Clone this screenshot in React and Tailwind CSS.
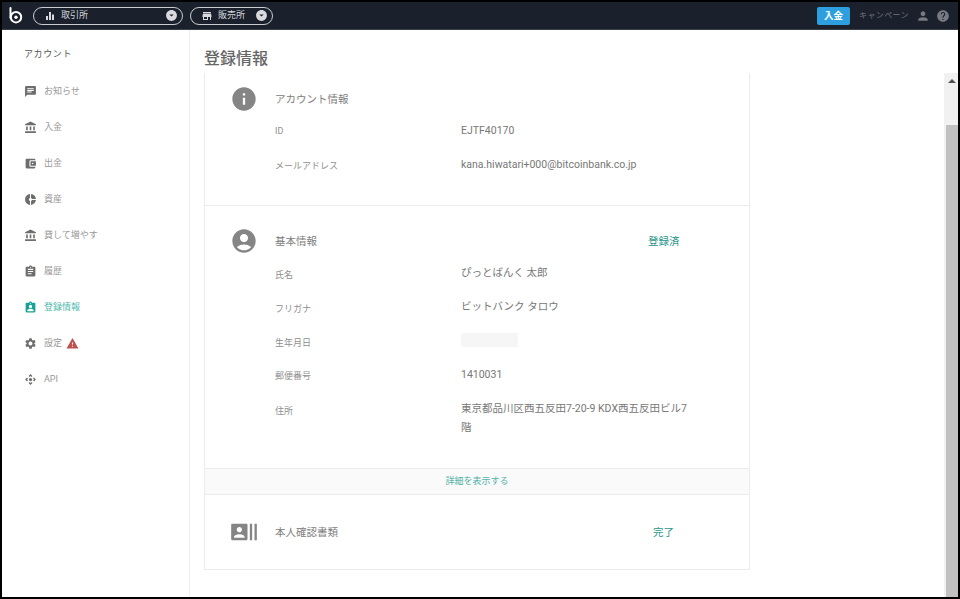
import React from "react";
import { MdChat, MdAccountBalance, MdAccountBalanceWallet, MdDonutSmall, MdAssignment, MdAssignmentInd, MdSettings, MdWarning, MdControlCamera, MdInfo, MdAccountCircle, MdRecentActors, MdPerson, MdHelp, MdEqualizer, MdStore, MdArrowDropDownCircle } from "react-icons/md";

const font = "font-['Roboto','Noto_Sans_CJK_JP',sans-serif]";

const nav = [
  { icon: MdChat, label: "お知らせ" },
  { icon: MdAccountBalance, label: "入金" },
  { icon: MdAccountBalanceWallet, label: "出金" },
  { icon: MdDonutSmall, label: "資産" },
  { icon: MdAccountBalance, label: "貸して増やす" },
  { icon: MdAssignment, label: "履歴" },
  { icon: MdAssignmentInd, label: "登録情報", active: true },
  { icon: MdSettings, label: "設定", warn: true },
  { icon: MdControlCamera, label: "API" },
];

function Logo() {
  return (
    <svg width="14" height="17" viewBox="0 0 14 17" fill="none" className="shrink-0">
      <path d="M1.5 1v10" stroke="#fff" strokeWidth="2" strokeLinecap="round" />
      <circle cx="7" cy="10.2" r="5.2" stroke="#fff" strokeWidth="2" />
      <circle cx="7" cy="10.2" r="1.7" fill="#fff" />
    </svg>
  );
}

function Pill({ icon: Icon, label, w }) {
  return (
    <div className={`flex items-center h-[18px] rounded-full border border-[#c9ccd1] pl-[10px] pr-[4px] ${w}`}>
      <Icon className="text-[#d8dadd] w-[12px] h-[12px] shrink-0" />
      <span className="ml-[5px] text-[9px] leading-none text-[#d5d8dc]">{label}</span>
      <MdArrowDropDownCircle className="ml-auto text-[#d8dadd] w-[13px] h-[13px] shrink-0" />
    </div>
  );
}

function Row({ label, children, labelClass = "", valueClass = "mb-[4px]", h = "h-[34px]", align = "items-center" }) {
  return (
    <div className={`flex ${align} ${h} pl-[70px]`}>
      <div className={`w-[186px] shrink-0 text-[9px] leading-none text-[#8f8f8f] ${labelClass}`}>{label}</div>
      <div className={`w-[232px] text-[10.5px] leading-[19px] text-[#777] ${valueClass}`}>{children}</div>
    </div>
  );
}

function SectionHead({ icon: Icon, title, status, statusClass = "", iconClass = "w-[28px] h-[28px]" }) {
  return (
    <div className="flex items-center h-[24px] pl-[24px]">
      <div className="flex items-center justify-center h-[24px] w-[30px] shrink-0">
        <Icon className={`text-[#858585] ${iconClass}`} />
      </div>
      <div className="ml-[16px] mt-[2px] w-[373px] shrink-0 text-[10.5px] leading-none text-[#808080]">{title}</div>
      <div className={`mt-[2px] text-[#1f968c] text-[10.5px] leading-none ${statusClass}`}>{status}</div>
    </div>
  );
}

export default function App() {
  return (
    <div className={`w-[960px] h-[599px] border-2 border-black bg-white flex flex-col overflow-hidden ${font}`}>
      <header className="h-[28px] shrink-0 bg-[#1a202c] border-b border-[#3b3f4a] flex items-center pl-[7px] pr-[8px]">
        <Logo />
        <div className="ml-[10px] flex items-center gap-[7px]">
          <Pill icon={MdEqualizer} label="取引所" w="w-[150px]" />
          <Pill icon={MdStore} label="販売所" w="w-[83px]" />
        </div>
        <button className="ml-auto w-[33px] h-[18px] rounded-[2px] bg-[#2d9fdf] text-white text-[9.5px] font-bold leading-none">入金</button>
        <span className="ml-[9px] text-[8px] leading-none text-[#6e727a] tracking-[0.4px]">キャンペーン</span>
        <MdPerson className="ml-[7px] w-[14px] h-[14px] text-[#777a80]" />
        <MdHelp className="ml-[6px] w-[14px] h-[14px] text-[#777a80]" />
      </header>

      <div className="flex-1 flex min-h-0">
        <aside className="w-[188px] shrink-0 border-r border-[#eeeeee] pl-[22px]">
          <div className="mt-[20px] text-[9px] leading-none text-[#555] tracking-[0.6px]">アカウント</div>
          <nav className="mt-[14px] flex flex-col">
            {nav.map((n) => (
              <div key={n.label} className="h-[36px] flex items-center">
                <n.icon className={`w-[13px] h-[13px] shrink-0 ${n.active ? "text-[#16a394]" : "text-[#6d6d6d]"}`} />
                <span className={`ml-[7px] text-[9px] leading-none ${n.active ? "text-[#4db8ad]" : "text-[#999]"}`}>{n.label}</span>
                {n.warn && <MdWarning className="ml-[4px] w-[13px] h-[13px] text-[#c0504d]" />}
              </div>
            ))}
          </nav>
        </aside>

        <main className="flex-1 min-w-0 flex flex-col">
          <h1 className="h-[43px] shrink-0 pl-[14px] pt-[19px] text-[16px] leading-[20px] font-medium text-[#666]">登録情報</h1>
          <div className="flex-1 min-h-0 flex pl-[14px]">
            <div className="w-[546px] shrink-0 self-start border-x border-b border-[#ececec]">
              <section className="pt-[14px] pb-[23px] border-b border-[#ececec]">
                <SectionHead icon={MdInfo} title="アカウント情報" />
                <div className="mt-[3px]">
                  <Row label="ID" valueClass="mb-[2px]">EJTF40170</Row>
                  <Row label="メールアドレス" labelClass="mt-[2px]" valueClass="mb-[2px]">kana.hiwatari+000@bitcoinbank.co.jp</Row>
                </div>
              </section>
              <section className="pt-[23px]">
                <SectionHead icon={MdAccountCircle} title="基本情報" status="登録済" />
                <div className="mt-[4px]">
                  <Row label="氏名" labelClass="mt-[2px]">ぴっとばんく 太郎</Row>
                  <Row label="フリガナ" labelClass="mt-[2px]">ビットバンク タロウ</Row>
                  <Row label="生年月日" labelClass="mt-[2px]"><div className="w-[57px] h-[14px] bg-[#f6f6f6]" /></Row>
                  <Row label="郵便番号">1410031</Row>
                  <Row label="住所" h="h-[75px]" align="items-start" labelClass="pt-[14px]" valueClass="pt-[6px]">東京都品川区西五反田7-20-9 KDX西五反田ビル7階</Row>
                </div>
              </section>
              <div className="h-[27px] bg-[#fafafa] border-y border-[#ececec] flex items-center justify-center text-[9px] leading-none text-[#52b3a9]">詳細を表示する</div>
              <section className="h-[74px] flex items-center">
                <div className="flex-1">
                  <SectionHead icon={MdRecentActors} title="本人確認書類" status="完了" statusClass="ml-[5px]" />
                </div>
              </section>
            </div>
            <div className="ml-auto w-[14px] shrink-0 bg-[#f1f1f1] flex flex-col pl-[2px]">
              <div className="h-[52px] shrink-0 flex justify-center pt-[6px]">
                <div className="w-0 h-0 border-x-[4px] border-x-transparent border-b-[4px] border-b-[#505050]" />
              </div>
              <div className="flex-1 bg-[#c1c1c1]" />
            </div>
          </div>
        </main>
      </div>
    </div>
  );
}
